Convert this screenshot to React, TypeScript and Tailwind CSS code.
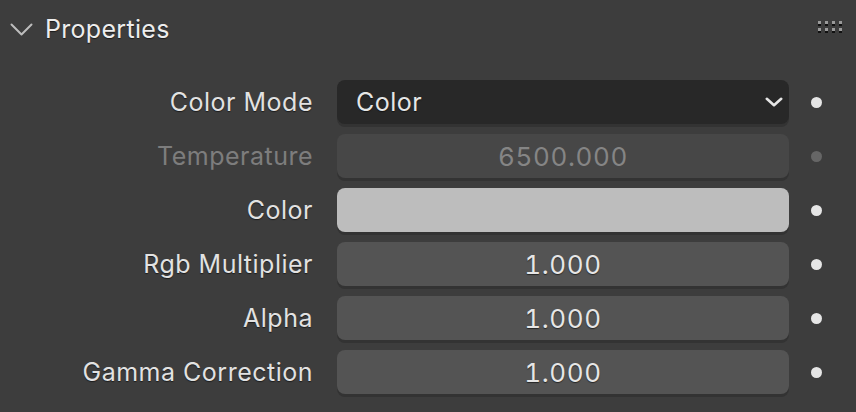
type Row = {
  label: string;
  kind: "enum" | "number" | "color";
  value?: string;
  disabled?: boolean;
};

const rows: Row[] = [
  { label: "Color Mode", kind: "enum", value: "Color" },
  { label: "Temperature", kind: "number", value: "6500.000", disabled: true },
  { label: "Color", kind: "color" },
  { label: "Rgb Multiplier", kind: "number", value: "1.000" },
  { label: "Alpha", kind: "number", value: "1.000" },
  { label: "Gamma Correction", kind: "number", value: "1.000" },
];

const shadow = "[text-shadow:0_1px_1px_rgba(0,0,0,0.55)]";

function Grip() {
  return (
    <div className="grid grid-cols-4 gap-x-[4px] gap-y-[4px]">
      {Array.from({ length: 8 }).map((_, i) => (
        <div key={i} className="w-[3px] h-[3px] bg-[#9a9a9a] shadow-[0_2px_0_#111]" />
      ))}
    </div>
  );
}

function Chevron({ w, h, sw, color }: { w: number; h: number; sw: number; color: string }) {
  return (
    <svg width={w} height={h} viewBox={`0 0 ${w} ${h}`} fill="none">
      <polyline
        points={`${sw / 2 + 0.5},${sw / 2 + 0.5} ${w / 2},${h - sw / 2 - 0.5} ${w - sw / 2 - 0.5},${sw / 2 + 0.5}`}
        stroke={color}
        strokeWidth={sw}
        strokeLinecap="round"
        strokeLinejoin="round"
      />
    </svg>
  );
}

function Field({ row }: { row: Row }) {
  const base =
    "h-[44px] rounded-[8px] flex items-center shadow-[0_3px_0_#333333]";
  if (row.kind === "enum") {
    return (
      <div className={`${base} bg-[#282828] pl-[19px] pr-[6px] justify-between`}>
        <span className={`pt-[2px] text-[25px] tracking-[0.5px] text-[#e6e6e6] ${shadow}`}>{row.value}</span>
        <Chevron w={18} h={10} sw={2.6} color="#e6e6e6" />
      </div>
    );
  }
  if (row.kind === "color") {
    return <div className={`${base} bg-[#bdbdbd]`} />;
  }
  return (
    <div
      className={`${base} justify-center ${
        row.disabled ? "bg-[#474747]" : "bg-[#545454]"
      }`}
    >
      <span
        className={`text-[26px] tabular-nums tracking-[0.6px] ${
          row.disabled ? "text-[#858585]" : `text-[#e6e6e6] ${shadow}`
        }`}
      >
        {row.value}
      </span>
    </div>
  );
}

export default function App() {
  return (
    <div
      className="w-[856px] h-[412px] bg-[#3d3d3d] overflow-hidden"
      style={{ fontFamily: "Inter, 'DejaVu Sans', sans-serif" }}
    >
      <div className="h-[58px] flex items-center pl-[10px] pr-[14px]">
        <Chevron w={23} h={13} sw={2} color="#bdbdbd" />
        <span className={`ml-[12px] pt-[2px] text-[25px] tracking-[0.3px] text-[#ededed] ${shadow}`}>
          Properties
        </span>
        <div className="ml-auto -mt-[6px]">
          <Grip />
        </div>
      </div>
      <div className="mt-[22px] flex flex-col gap-[10px]">
        {rows.map((row) => (
          <div key={row.label} className="flex items-center">
            <div
              className={`w-[313px] pt-[2px] text-right text-[25px] tracking-[0.5px] ${
                row.disabled ? "text-[#7d7d7d]" : `text-[#e2e2e2] ${shadow}`
              }`}
            >
              {row.label}
            </div>
            <div className="ml-[24px] w-[452px]">
              <Field row={row} />
            </div>
            <div className="ml-[22px] flex items-center">
              <div
                className={`w-[11px] h-[11px] rounded-full ${
                  row.disabled ? "bg-[#666666]" : "bg-[#e6e6e6]"
                }`}
              />
            </div>
          </div>
        ))}
      </div>
    </div>
  );
}
